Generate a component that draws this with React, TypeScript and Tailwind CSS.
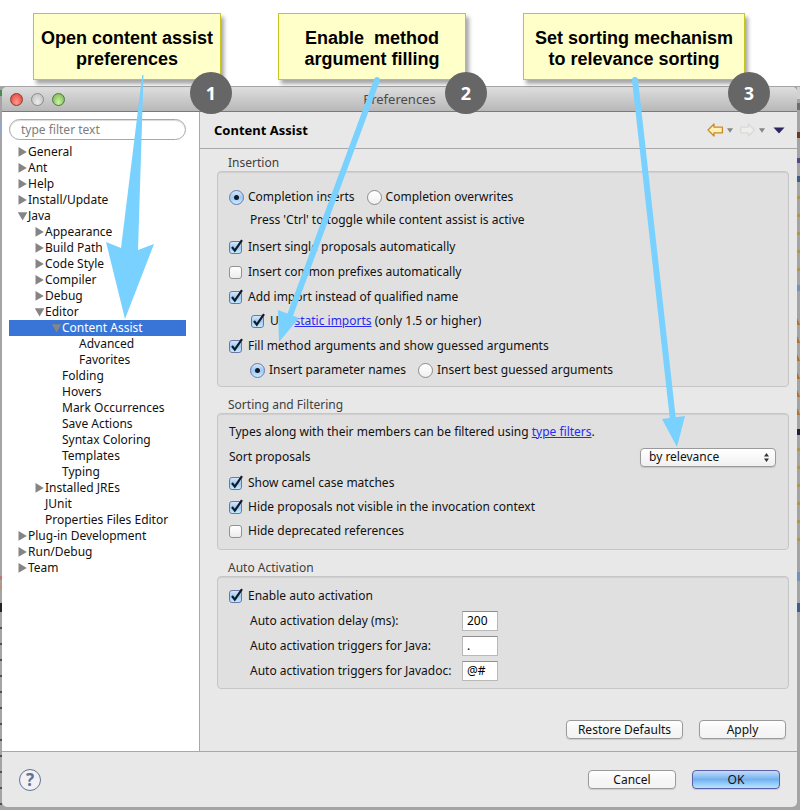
import React, { useId, useState } from "react";

type TreeRow = { label: string; depth: number; state?: "open" | "closed"; selected?: boolean };

const TREE: TreeRow[] = [
  { label: "General", depth: 0, state: "closed" },
  { label: "Ant", depth: 0, state: "closed" },
  { label: "Help", depth: 0, state: "closed" },
  { label: "Install/Update", depth: 0, state: "closed" },
  { label: "Java", depth: 0, state: "open" },
  { label: "Appearance", depth: 1, state: "closed" },
  { label: "Build Path", depth: 1, state: "closed" },
  { label: "Code Style", depth: 1, state: "closed" },
  { label: "Compiler", depth: 1, state: "closed" },
  { label: "Debug", depth: 1, state: "closed" },
  { label: "Editor", depth: 1, state: "open" },
  { label: "Content Assist", depth: 2, state: "open", selected: true },
  { label: "Advanced", depth: 3 },
  { label: "Favorites", depth: 3 },
  { label: "Folding", depth: 2 },
  { label: "Hovers", depth: 2 },
  { label: "Mark Occurrences", depth: 2 },
  { label: "Save Actions", depth: 2 },
  { label: "Syntax Coloring", depth: 2 },
  { label: "Templates", depth: 2 },
  { label: "Typing", depth: 2 },
  { label: "Installed JREs", depth: 1, state: "closed" },
  { label: "JUnit", depth: 1 },
  { label: "Properties Files Editor", depth: 1 },
  { label: "Plug-in Development", depth: 0, state: "closed" },
  { label: "Run/Debug", depth: 0, state: "closed" },
  { label: "Team", depth: 0, state: "closed" },
];

const INDENT = ["pl-2", "pl-[25px]", "pl-[42px]", "pl-[59px]"];

function Disclosure({ state }: { state?: "open" | "closed" }) {
  return (
    <svg viewBox="0 0 11 10" className="h-[10px] w-[11px] shrink-0" fill="#858585" aria-hidden="true">
      {state === "closed" && <path d="M1.5 0V9.8L9.8 4.9Z" />}
      {state === "open" && <path d="M.8 1.2H10.4L5.6 9.4Z" />}
    </svg>
  );
}

function Tree() {
  return (
    <ul className="mt-1">
      {TREE.map((row) => (
        <li key={row.label}>
          <button
            type="button"
            className={`flex h-4 w-full items-center whitespace-nowrap leading-4 ${INDENT[row.depth]} ${
              row.selected ? "bg-[#3875d7] text-white" : ""
            }`}
          >
            <Disclosure state={row.state} />
            {row.label}
          </button>
        </li>
      ))}
    </ul>
  );
}

function Check({ label, defaultChecked, children }: { label?: string; defaultChecked?: boolean; children?: React.ReactNode }) {
  const id = useId();
  const [on, setOn] = useState(!!defaultChecked);
  return (
    <div className="flex h-4 items-center gap-[6px]">
      <span className="grid size-[13px] shrink-0">
        <input
          id={id}
          type="checkbox"
          checked={on}
          onChange={(e) => setOn(e.target.checked)}
          className="col-start-1 row-start-1 size-[13px] appearance-none rounded-[3px] border border-[#929292] bg-linear-to-b from-white to-[#ececec] checked:border-[#6a78a8] checked:from-[#d4e6fa] checked:via-[#a0caf2] checked:to-[#c4ecff]"
        />
        {on && (
          <svg viewBox="0 0 13 13" className="pointer-events-none col-start-1 row-start-1 size-[13px] overflow-visible" fill="none" stroke="#101a2c" strokeWidth="2.2" aria-hidden="true">
            <path d="M3 6L5.8 9.6L13 -.8" />
          </svg>
        )}
      </span>
      <label htmlFor={id}>{label ?? children}</label>
    </div>
  );
}

function Radio({ label, name, defaultChecked }: { label: string; name: string; defaultChecked?: boolean }) {
  const id = useId();
  return (
    <div className="flex h-4 items-center gap-1">
      <span className="grid size-[15px] shrink-0 place-items-center">
        <input
          id={id}
          type="radio"
          name={name}
          defaultChecked={defaultChecked}
          className="peer col-start-1 row-start-1 size-[15px] appearance-none rounded-full border border-[#8c8c8c] bg-linear-to-b from-white to-[#f0f0f0] checked:border-[#6a78a8] checked:from-[#d4e6fa] checked:via-[#a0caf2] checked:to-[#c4ecff]"
        />
        <span className="pointer-events-none col-start-1 row-start-1 hidden size-[5px] rounded-full bg-[#101a2c] peer-checked:block" />
      </span>
      <label htmlFor={id}>{label}</label>
    </div>
  );
}

function Group({ title, className, children }: { title: string; className: string; children: React.ReactNode }) {
  return (
    <section>
      <h2 className="h-4 pl-[11px] leading-4 text-[#404040]">{title}</h2>
      <div className={`rounded-[4px] border border-[#c6c6c6] bg-[#e0e0e0] pl-[11px] pr-3 shadow-[inset_0_1px_1px_rgba(0,0,0,0.08)] ${className}`}>
        {children}
      </div>
    </section>
  );
}

function Field({ label, value }: { label: string; value: string }) {
  const id = useId();
  return (
    <div className="flex h-[21px] items-center pl-[21px]">
      <label htmlFor={id} className="w-[212px]">{label}</label>
      <input
        id={id}
        defaultValue={value}
        className="h-[20px] w-9 border border-[#b9b9b9] border-t-[#8e8e8e] bg-white px-1 text-[12px] leading-4 text-black outline-none"
      />
    </div>
  );
}

function PushButton({ label, className, primary }: { label: string; className: string; primary?: boolean }) {
  return (
    <button
      type="button"
      className={`h-[19px] rounded-[4px] border leading-4 shadow-[0_1px_1px_rgba(0,0,0,0.12)] ${
        primary
          ? "border-[#5a5fa8] bg-linear-to-b from-[#c4dcf8] via-[#72b1f0] to-[#b8e6ff]"
          : "border-[#9a9a9a] bg-linear-to-b from-white via-[#f6f6f6] to-[#f3f3f3]"
      } ${className}`}
    >
      {label}
    </button>
  );
}

function Caret({ color, wide }: { color: string; wide?: boolean }) {
  return wide ? (
    <svg viewBox="0 0 12 7" className="h-[7px] w-3" aria-hidden="true">
      <path d="M.5 .5H11.5L6 6.5Z" fill={color} />
    </svg>
  ) : (
    <svg viewBox="0 0 6 5" className="h-[5px] w-[6px]" aria-hidden="true">
      <path d="M0 .3H6L3 4.8Z" fill={color} />
    </svg>
  );
}

function HistoryArrow({ forward }: { forward?: boolean }) {
  return (
    <svg viewBox="0 0 17 14" className="h-[14px] w-[17px]" aria-hidden="true">
      <path
        d={forward ? "M15.5 7L9.5 1V4.2H1.8V9.8H9.5V13Z" : "M1 7L7 1V4.2H15.4V9.8H7V13Z"}
        fill={forward ? "#eeeeea" : "#fff0b8"}
        stroke={forward ? "#d9d9d5" : "#c9892a"}
        strokeWidth="1.3"
        strokeLinejoin="round"
      />
    </svg>
  );
}

/* Slivers of the workbench that stay visible beside the dialog. */
const LEFT_TICKS = [628, 644, 660, 676, 692, 708, 724, 740, 756, 772, 788, 804];
const YELLOW_TICKS = [197, 215, 233, 251, 269, 449, 467, 485, 503, 521, 539];
const ORANGE_TICKS = [322, 340, 358, 376, 394, 412, 430 - 18];

function WorkbenchEdge({ side }: { side: "left" | "right" }) {
  return (
    <svg
      viewBox="0 0 3 810"
      preserveAspectRatio="none"
      className={`pointer-events-none absolute top-0 h-[810px] ${side === "left" ? "left-0 w-[2px]" : "right-0 w-[3px]"}`}
      aria-hidden="true"
    >
      {side === "left" ? (
        <g>
          <rect x="0" y="90" width="3" height="6" fill="#4c8a55" />
          <rect x="0" y="122" width="3" height="12" fill="#8fa9cb" />
          <rect x="0" y="576" width="3" height="4" fill="#c2747a" />
          <rect x="0" y="583" width="3" height="7" fill="#b3997a" />
          <rect x="0" y="603" width="3" height="9" fill="#2c2018" />
          {LEFT_TICKS.map((y) => <rect key={y} x="0" y={y - 1} width="3" height="2" fill="#5f4a34" />)}
        </g>
      ) : (
        <g>
          <rect x="0" y="87" width="3" height="12" fill="#d2d2d2" />
          <rect x="0" y="103" width="3" height="7" fill="#6c6c6c" />
          <rect x="0" y="132" width="3" height="6" fill="#6a3a20" />
          <rect x="0" y="158" width="3" height="5" fill="#4a4a8c" />
          <rect x="0" y="176" width="3" height="6" fill="#3c5f8c" />
          <rect x="0" y="285" width="3" height="6" fill="#6f93bd" />
          <rect x="0" y="429" width="3" height="6" fill="#20203a" />
          <rect x="0" y="572" width="3" height="9" fill="#6f93bd" />
          <rect x="0" y="603" width="3" height="9" fill="#3c5f8c" />
          {YELLOW_TICKS.map((y) => <rect key={y} x="0" y={y - 1} width="3" height="3" fill="#b39545" />)}
          {ORANGE_TICKS.slice(0, 6).map((y) => <path key={y} d={`M0 ${y - 4}L3 ${y + 3}H0Z`} fill="#b36f22" />)}
        </g>
      )}
    </svg>
  );
}

function Note({ lines, className }: { lines: [string, string]; className: string }) {
  return (
    <div
      className={`absolute top-[13px] flex h-[67px] flex-col items-center justify-center whitespace-pre border border-[#c8c420] bg-[#ffffca] pt-1 font-['Liberation_Sans',Arial,sans-serif] text-[18px] font-bold leading-[21px] text-black shadow-[3px_4px_4px_rgba(0,0,0,0.35)] ${className}`}
    >
      <span>{lines[0]}</span>
      <span>{lines[1]}</span>
    </div>
  );
}

function Step({ n, className }: { n: number; className: string }) {
  return (
    <div
      className={`absolute top-[72px] grid size-[42px] place-items-center rounded-full bg-[#666] font-['Open_Sans','Noto_Sans',sans-serif] text-[18px] font-bold leading-none text-white ${className}`}
    >
      {n}
    </div>
  );
}

export default function App() {
  return (
    <div className="relative min-h-screen bg-white pt-[86px] font-['Noto_Sans','Open_Sans',sans-serif] text-[12px] text-[#111]">
      <div className="flex min-h-[724px] flex-col bg-[#a4a4a4] pb-[3px] pl-[2px] pr-[3px] pt-px">
        <main className="flex grow flex-col overflow-hidden rounded-[5px] bg-[#e8e8e8]">
          <header className="flex h-[25px] shrink-0 items-center border-b border-[#7a7a7a] bg-linear-to-b from-[#dedede] to-[#b8b8b8] pl-2">
            <div className="flex w-[60px] gap-2">
              <button type="button" aria-label="Close" className="size-[13px] rounded-full border border-[#8d3a34] bg-radial-[at_50%_75%] from-[#ff9a8c] to-[#dd3b35]" />
              <button type="button" aria-label="Minimize" className="size-[13px] rounded-full border border-[#8c8c8c] bg-radial-[at_50%_75%] from-[#ececec] to-[#b9b9b9]" />
              <button type="button" aria-label="Zoom" className="size-[13px] rounded-full border border-[#4d7a37] bg-radial-[at_50%_75%] from-[#cbf3a0] to-[#6fb04c]" />
            </div>
            <h1 className="grow pr-[68px] text-center text-[13px] leading-4 text-[#4a4a4a]">Preferences</h1>
          </header>

          <div className="flex grow">
            <aside className="w-[198px] shrink-0 border-r border-[#a8a8a8] bg-white pl-[7px] pr-[13px] pt-[7px]">
              <input
                aria-label="Filter"
                placeholder="type filter text"
                className="block h-[21px] w-full rounded-full border border-[#a8a8a8] bg-white px-[11px] text-[12px] leading-4 shadow-[inset_0_1px_1px_rgba(0,0,0,0.15)] outline-none placeholder:text-[#7d7d7d]"
              />
              <Tree />
            </aside>

            <div className="flex min-w-0 grow flex-col">
              <div className="flex h-[37px] shrink-0 items-center border-b border-[#a8a8a8] pl-[14px] pr-3">
                <h2 className="grow text-[13px] font-bold leading-4 text-black">Content Assist</h2>
                <button type="button" aria-label="Back"><HistoryArrow /></button>
                <button type="button" aria-label="Back history" className="ml-[3px]"><Caret color="#858585" /></button>
                <button type="button" aria-label="Forward" className="ml-[6px]"><HistoryArrow forward /></button>
                <button type="button" aria-label="Forward history" className="ml-[3px]"><Caret color="#858585" /></button>
                <button type="button" aria-label="Menu" className="ml-2"><Caret color="#2b2560" wide /></button>
              </div>

              <div className="flex flex-col gap-[10px] pl-[17px] pr-2 pt-[6px]">
                <Group title="Insertion" className="pb-2 pt-[17px]">
                  <div className="flex gap-3">
                    <Radio name="completion" label="Completion inserts" defaultChecked />
                    <Radio name="completion" label="Completion overwrites" />
                  </div>
                  <p className="mb-[11px] mt-[7px] pl-[21px] leading-4">Press &#39;Ctrl&#39; to toggle while content assist is active</p>
                  <div className="flex flex-col gap-[9px]">
                    <Check label="Insert single proposals automatically" defaultChecked />
                    <Check label="Insert common prefixes automatically" />
                    <div className="flex flex-col gap-2">
                      <Check label="Add import instead of qualified name" defaultChecked />
                      <div className="pl-[22px]">
                        <Check defaultChecked>
                          Use <a href="#static-imports" className="text-[#2a2af0] underline">static imports</a> (only 1.5 or higher)
                        </Check>
                      </div>
                    </div>
                    <div className="flex flex-col gap-2">
                      <Check label="Fill method arguments and show guessed arguments" defaultChecked />
                      <div className="flex gap-3 pl-[21px]">
                        <Radio name="fill" label="Insert parameter names" defaultChecked />
                        <Radio name="fill" label="Insert best guessed arguments" />
                      </div>
                    </div>
                  </div>
                </Group>

                <Group title="Sorting and Filtering" className="pb-[10px] pt-[10px]">
                  <p className="leading-4">
                    Types along with their members can be filtered using <a href="#type-filters" className="text-[#2a2af0] underline">type filters</a>.
                  </p>
                  <div className="mb-[9px] mt-2 flex h-[18px] items-center justify-between">
                    <label htmlFor="sort">Sort proposals</label>
                    <div className="grid w-[136px] items-center">
                      <select
                        id="sort"
                        className="col-start-1 row-start-1 h-[19px] appearance-none rounded-[4px] border border-[#9a9a9a] bg-linear-to-b from-white to-[#f0f0f0] pl-2 leading-4 shadow-[0_1px_1px_rgba(0,0,0,0.12)]"
                      >
                        <option>by relevance</option>
                        <option>alphabetically</option>
                      </select>
                      <svg viewBox="0 0 5 9" className="pointer-events-none col-start-1 row-start-1 mr-[7px] h-[9px] w-[5px] justify-self-end" fill="#333" aria-hidden="true">
                        <path d="M0 3.5L2.5 0L5 3.5ZM0 5.5L2.5 9L5 5.5Z" />
                      </svg>
                    </div>
                  </div>
                  <div className="flex flex-col gap-2">
                    <Check label="Show camel case matches" defaultChecked />
                    <Check label="Hide proposals not visible in the invocation context" defaultChecked />
                    <Check label="Hide deprecated references" />
                  </div>
                </Group>

                <Group title="Auto Activation" className="pb-[7px] pt-[11px]">
                  <Check label="Enable auto activation" defaultChecked />
                  <div className="mt-[6px] flex flex-col gap-1">
                    <Field label="Auto activation delay (ms):" value="200" />
                    <Field label="Auto activation triggers for Java:" value="." />
                    <Field label="Auto activation triggers for Javadoc:" value="@#" />
                  </div>
                </Group>
              </div>

              <div className="mt-auto flex justify-end gap-4 pb-3 pr-[11px]">
                <PushButton label="Restore Defaults" className="w-[117px]" />
                <PushButton label="Apply" className="w-[87px]" />
              </div>
            </div>
          </div>

          <footer className="flex h-[56px] shrink-0 items-center border-t border-[#a8a8a8] pl-[17px] pr-[17px]">
            <button type="button" aria-label="Help" className="grid size-[22px] place-items-center rounded-full border border-[#5f7396] bg-[#f2f2f4] text-[17px] font-bold leading-none text-[#5f7396]">
              ?
            </button>
            <div className="ml-auto flex gap-4">
              <PushButton label="Cancel" className="w-[88px]" />
              <PushButton label="OK" className="w-[88px]" primary />
            </div>
          </footer>
        </main>
      </div>

      <WorkbenchEdge side="left" />
      <WorkbenchEdge side="right" />

      <Note lines={["Open content assist", "preferences"]} className="left-[33px] w-[188px]" />
      <Note lines={["Enable  method", "argument filling"]} className="left-[278px] w-[188px]" />
      <Note lines={["Set sorting mechanism", "to relevance sorting"]} className="left-[523px] w-[222px]" />

      <svg viewBox="0 0 800 810" className="pointer-events-none absolute left-0 top-0 h-[810px] w-[800px]" fill="#78d1ff" aria-hidden="true">
        <path d="M142.300 75H143.500L138 250L154 244L125 319L106 242L121 248Z" />
        <path d="M377 80L289 318" stroke="#78d1ff" strokeWidth="6" strokeLinecap="round" />
        <path d="M278 310L299 318L279 342Z" />
        <path d="M635 80L673 420" stroke="#78d1ff" strokeWidth="6" strokeLinecap="round" />
        <path d="M662 419L685 416L677 447Z" />
      </svg>

      <Step n={1} className="left-[190px]" />
      <Step n={2} className="left-[445px]" />
      <Step n={3} className="left-[728px]" />
    </div>
  );
}
